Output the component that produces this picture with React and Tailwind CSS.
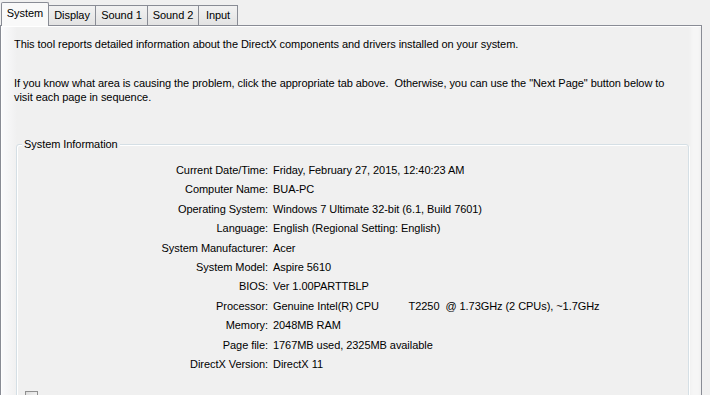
const tabs = [
  ["System", "w-[48px]"],
  ["Display", "w-[47px]"],
  ["Sound 1", "w-[52px]"],
  ["Sound 2", "w-[51px]"],
  ["Input", "w-[39px]"],
];

const rows = [
  ["Current Date/Time:", "Friday, February 27, 2015, 12:40:23 AM"],
  ["Computer Name:", "BUA-PC"],
  ["Operating System:", "Windows 7 Ultimate 32-bit (6.1, Build 7601)"],
  ["Language:", "English (Regional Setting: English)"],
  ["System Manufacturer:", "Acer"],
  ["System Model:", "Aspire 5610"],
  ["BIOS:", "Ver 1.00PARTTBLP"],
  ["Processor:", "Genuine Intel(R) CPU          T2250  @ 1.73GHz (2 CPUs), ~1.7GHz"],
  ["Memory:", "2048MB RAM"],
  ["Page file:", "1767MB used, 2325MB available"],
  ["DirectX Version:", "DirectX 11"],
];

export default function App() {
  return (
    <div className="w-[710px] h-[395px] overflow-hidden bg-[#f0f0f0] text-[11px] text-black tracking-[-0.06px] font-['Liberation_Sans',Arial,sans-serif]">
      {/* Tab strip */}
      <div className="flex items-end h-[25px] pl-[1px] relative z-10">
        {tabs.map(([t, w], i) =>
          i === 0 ? (
            <div
              key={t}
              className={`${w} h-[24px] -mb-[1px] pt-[4px] text-center border border-b-0 border-[#898c95] bg-[#f9f9f9] rounded-t-[2px] leading-[13px]`}
            >
              {t}
            </div>
          ) : (
            <div
              key={t}
              className={`${w} h-[20px] pt-[3px] text-center border border-l-0 border-b-0 border-[#898c95] bg-gradient-to-b from-[#f2f2f2] to-[#e3e3e3] leading-[13px]`}
            >
              {t}
            </div>
          )
        )}
      </div>

      {/* Tab page */}
      <div className="w-[702px] h-[400px] border border-[#898c95] shadow-[inset_1px_1px_0_#fff] bg-[linear-gradient(to_right,#fbfbfd,#f0f0f0_16px,#f0f0f0_688px,#f6f6f6_692px,#f6f6f6_697px,#f0f0f0)] pt-[11px]">
        <p className="pl-[13px] leading-[14px]">
          This tool reports detailed information about the DirectX components and drivers installed on your system.
        </p>
        <p className="pl-[13px] pr-[20px] mt-[25px] leading-[14px]">
          If you know what area is causing the problem, click the appropriate tab above.&nbsp; Otherwise, you can use the "Next Page" button below to visit each page in sequence.
        </p>

        {/* Group box */}
        <div className="relative ml-[15px] mt-[40px] w-[673px] h-[300px] border border-[#d5dfe5] rounded-[3px] shadow-[inset_1px_1px_0_#fff,1px_1px_0_#fff] pt-[16px]">
          <span className="absolute -top-[8px] left-[5px] px-[2px] bg-[#f0f0f0] leading-[14px]">
            System Information
          </span>
          <div className="grid grid-cols-[251px_1fr] gap-x-[5px]">
            {rows.map(([k, v]) => (
              <div key={k} className="contents">
                <div className="text-right h-[19.4px] leading-[19.4px]">{k}</div>
                <div className="whitespace-pre h-[19.4px] leading-[19.4px]">{v}</div>
              </div>
            ))}
          </div>
          <div className="ml-[8px] mt-[17px] w-[13px] h-[13px] border border-[#8f8f8f] bg-gradient-to-br from-[#dcdcdc] to-white" />
        </div>
      </div>
    </div>
  );
}
